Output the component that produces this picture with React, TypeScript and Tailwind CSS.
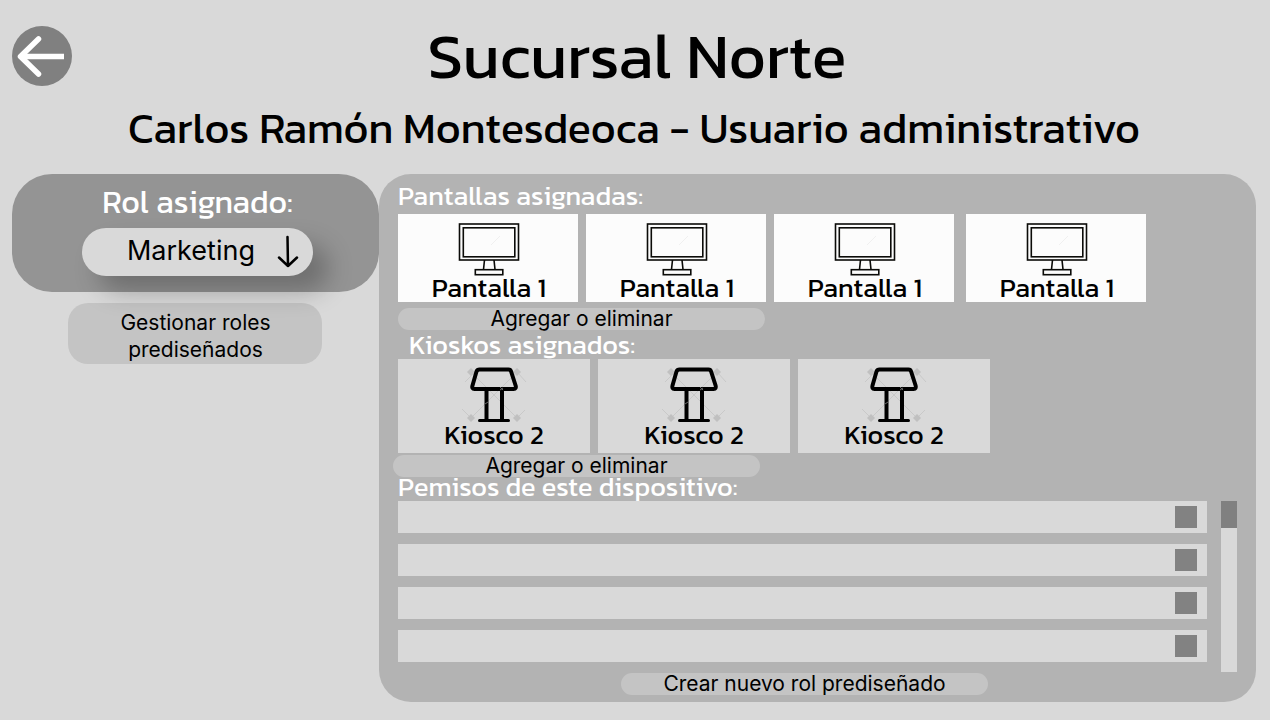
import React from "react";

const heading = "font-['Kanit','Inter',sans-serif] font-normal";

function MonitorIcon() {
  return (
    <svg viewBox="0 0 62 54" className="h-[54px] w-[62px]" fill="none" stroke="#0b0b08" strokeWidth="1.6" aria-hidden="true">
      <path d="M33 23 42 14" stroke="#f0f0f0" strokeWidth="1" />
      <rect x="1.500" y="2" width="59" height="36" />
      <rect x="5.300" y="5.800" width="51.500" height="29" />
      <path d="M26.500 38 25.500 47.500M36 38l1 9.500" />
      <rect x="17.300" y="47.700" width="27.500" height="5" />
    </svg>
  );
}

function KioskIcon() {
  return (
    <svg viewBox="0 0 66 56" className="h-14 w-[66px]" fill="none" aria-hidden="true">
      <g stroke="#c9c9c9" strokeWidth="1">
        <path d="M4 15 13 6M57 6l8 9M1 42l10 10M55 52l9-9M10 5l46 46M56 5 10 51" />
      </g>
      <g fill="#c0c0c0">
        <path d="m10 1 4 4-4 4-4-4zM56 1l4 4-4 4-4-4zM10 47l4 4-4 4-4-4zM56 47l4 4-4 4-4-4z" />
      </g>
      <g stroke="#000" strokeWidth="4" strokeLinejoin="round" strokeLinecap="round">
        <path d="M18.500 2.500h29q2 0 2.600 2l4.500 14q1 3.500-2 3.500H13.500q-3 0-2-3.500l4-14q.8-2 3-2Z" />
        <path d="M25.500 22v31M41 22v31" strokeLinecap="butt" />
      </g>
      <path d="M18.500 53.500h29" stroke="#000" strokeWidth="3" strokeLinecap="round" />
      <path d="m24 37 3-2M39 20l3 3M39 23l3-2" stroke="#666" strokeWidth="1" />
    </svg>
  );
}

function PillButton({ children }: { children: React.ReactNode }) {
  return (
    <button
      type="button"
      className="flex h-[22px] w-[367px] items-center justify-center rounded-full bg-[#c4c4c4] pb-0.5 text-[21px] leading-none whitespace-nowrap text-black"
    >
      {children}
    </button>
  );
}

const screens = ["Pantalla 1", "Pantalla 1", "Pantalla 1", "Pantalla 1"];
const kiosks = ["Kiosco 2", "Kiosco 2", "Kiosco 2"];
const permissions = [1, 2, 3, 4];

export default function App() {
  return (
    <div className="min-h-screen bg-[#d9d9d9] pr-3.5 pb-4 pl-3 font-['Inter',sans-serif] text-black">
      <header className="pt-6">
        <div className="grid grid-cols-[60px_1fr_54px] items-center">
          <button
            type="button"
            aria-label="Volver"
            className="flex size-[60px] items-center justify-center rounded-full bg-[#808080]"
          >
            <svg viewBox="0 0 60 60" className="size-[60px]" fill="none" stroke="#fff" strokeWidth="5.500" aria-hidden="true">
              <path d="M52 30.500H9" />
              <path d="M26.500 13 8.500 30.500l18 17.500" strokeLinecap="round" strokeLinejoin="round" />
            </svg>
          </button>
          <h1 className={`${heading} text-center text-[64px] leading-[64px]`}>Sucursal Norte</h1>
        </div>
        <h2 className={`${heading} mt-3.5 text-center text-[43px] leading-[52px] whitespace-nowrap`}>
          Carlos Ramón Montesdeoca - Usuario administrativo
        </h2>
      </header>

      <main className="mt-5 grid grid-cols-[29.5%_1fr] items-start">
        <section className="flex flex-col items-center gap-[11px]">
          <div className="flex h-[118px] w-full flex-col items-center rounded-[40px] bg-[#949494] pt-2.5 pl-1">
            <label htmlFor="rol" className={`${heading} text-[32px] leading-9 text-white`}>
              Rol asignado:
            </label>
            <div className="relative mt-2 w-[231px]">
              <select
                id="rol"
                className="h-12 w-full appearance-none rounded-full bg-[#d9d9d9] pb-0.5 pl-[45px] text-[27px] shadow-[16px_16px_24px_rgba(0,0,0,0.25)]"
              >
                <option>Marketing</option>
              </select>
              <svg
                viewBox="0 0 22 34"
                className="pointer-events-none absolute top-[7px] right-3.5 h-[34px] w-[22px]"
                fill="none"
                stroke="#000"
                strokeWidth="2.500"
                strokeLinecap="round"
                strokeLinejoin="round"
                aria-hidden="true"
              >
                <path d="m10.500 2 .5 29M2 22.500l9 8.500 9-8.500" />
              </svg>
            </div>
          </div>
          <button
            type="button"
            className="h-[61px] w-[254px] rounded-[20px] bg-[#c4c4c4] px-10 pt-1 text-[21px] leading-[27px]"
          >
            Gestionar roles prediseñados
          </button>
        </section>

        <section className="rounded-[32px] bg-[#b3b3b3] pr-[19px] pb-[7px] pl-[19px]">
          <h3 className={`${heading} pt-1 text-[27px] leading-9 text-white`}>Pantallas asignadas:</h3>
          <ul className="flex gap-2">
            {screens.map((name, i) => (
              <li
                key={i}
                className="flex h-[88px] w-[180px] flex-col items-center bg-[#fcfcfc] pt-2 pl-0.5 last:ml-1"
              >
                <MonitorIcon />
                <span className={`${heading} text-[27px] leading-6`}>{name}</span>
              </li>
            ))}
          </ul>
          <div className="mt-1.5">
            <PillButton>Agregar o eliminar</PillButton>
          </div>

          <h3 className={`${heading} pl-[11px] text-[27px] leading-[29px] text-white`}>Kioskos asignados:</h3>
          <ul className="flex gap-2">
            {kiosks.map((name, i) => (
              <li key={i} className="flex h-[94px] w-[192px] flex-col items-center bg-[#d9d9d9] pt-2">
                <KioskIcon />
                <span className={`${heading} text-[27px] leading-6`}>{name}</span>
              </li>
            ))}
          </ul>
          <div className="-ml-[5px] pt-0.5">
            <PillButton>Agregar o eliminar</PillButton>
          </div>

          <h3 className={`${heading} pb-1 text-[27px] leading-5 text-white`}>Pemisos de este dispositivo:</h3>
          <div className="flex items-start gap-3.5">
            <div className="flex flex-1 flex-col items-center gap-[11px]">
              {permissions.map((n) => (
                <label key={n} className="flex h-8 w-full items-center justify-end bg-[#d9d9d9] pr-2.5">
                  <input
                    type="checkbox"
                    aria-label={`Permiso ${n}`}
                    className="size-[22px] appearance-none bg-[#828282] checked:bg-[#4d4d4d]"
                  />
                </label>
              ))}
              <div className="pl-1">
                <PillButton>Crear nuevo rol prediseñado</PillButton>
              </div>
            </div>
            <div className="h-[171px] w-4 bg-[#d9d9d9]">
              <div className="h-[27px] bg-[#808080]" />
            </div>
          </div>
        </section>
      </main>
    </div>
  );
}
